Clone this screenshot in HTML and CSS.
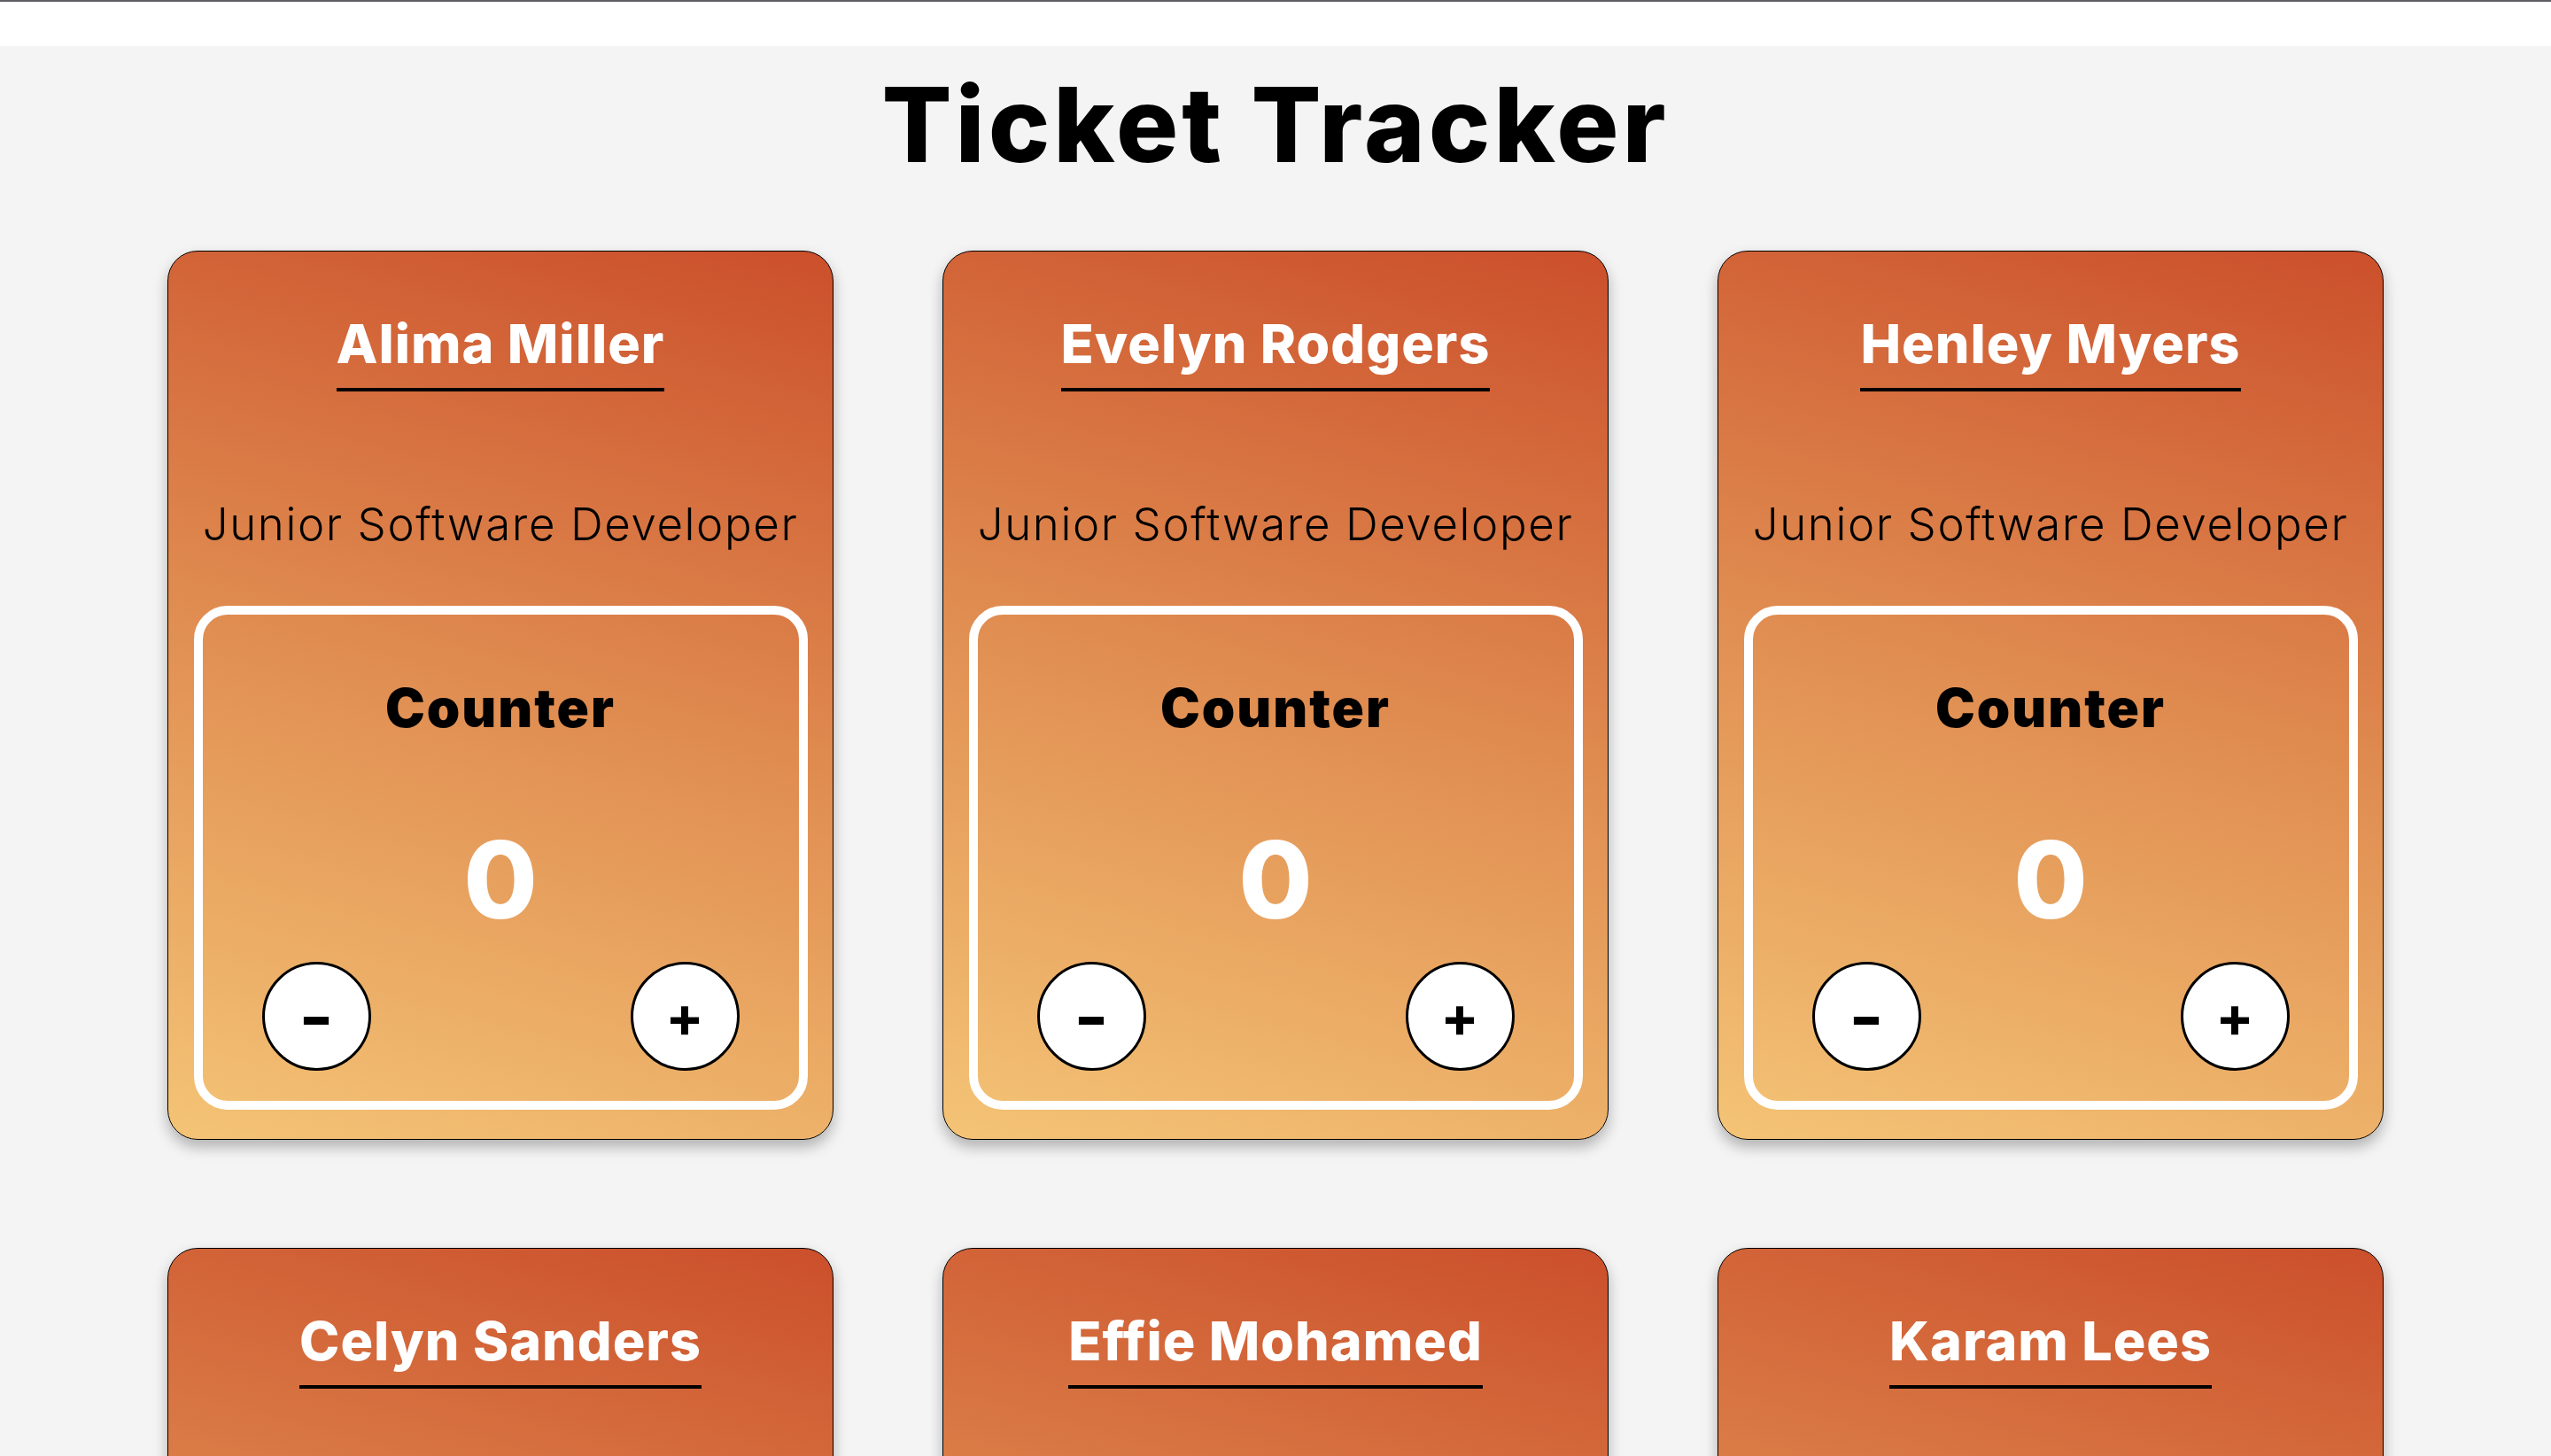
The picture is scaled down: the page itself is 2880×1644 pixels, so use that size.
FILE: index.html
```html
<!DOCTYPE html>
<html lang="en">
<head>
<meta charset="utf-8">
<title>Ticket Tracker</title>
<link rel="stylesheet" href="styles.css">
</head>
<body>
<div class="topbar"></div>
<main class="page">
  <h1 class="title">Ticket Tracker</h1>
  <section class="grid">
    <article class="card">
      <h2 class="name">Alima Miller</h2>
      <p class="role">Junior Software Developer</p>
      <div class="counter">
        <h3 class="counter-title">Counter</h3>
        <div class="count">0</div>
        <div class="buttons">
          <button class="btn btn-dec">-</button>
          <button class="btn">+</button>
        </div>
      </div>
    </article>
    <article class="card">
      <h2 class="name">Evelyn Rodgers</h2>
      <p class="role">Junior Software Developer</p>
      <div class="counter">
        <h3 class="counter-title">Counter</h3>
        <div class="count">0</div>
        <div class="buttons">
          <button class="btn btn-dec">-</button>
          <button class="btn">+</button>
        </div>
      </div>
    </article>
    <article class="card">
      <h2 class="name">Henley Myers</h2>
      <p class="role">Junior Software Developer</p>
      <div class="counter">
        <h3 class="counter-title">Counter</h3>
        <div class="count">0</div>
        <div class="buttons">
          <button class="btn btn-dec">-</button>
          <button class="btn">+</button>
        </div>
      </div>
    </article>
    <article class="card">
      <h2 class="name">Celyn Sanders</h2>
      <p class="role">Junior Software Developer</p>
      <div class="counter">
        <h3 class="counter-title">Counter</h3>
        <div class="count">0</div>
        <div class="buttons">
          <button class="btn btn-dec">-</button>
          <button class="btn">+</button>
        </div>
      </div>
    </article>
    <article class="card">
      <h2 class="name">Effie Mohamed</h2>
      <p class="role">Junior Software Developer</p>
      <div class="counter">
        <h3 class="counter-title">Counter</h3>
        <div class="count">0</div>
        <div class="buttons">
          <button class="btn btn-dec">-</button>
          <button class="btn">+</button>
        </div>
      </div>
    </article>
    <article class="card">
      <h2 class="name">Karam Lees</h2>
      <p class="role">Junior Software Developer</p>
      <div class="counter">
        <h3 class="counter-title">Counter</h3>
        <div class="count">0</div>
        <div class="buttons">
          <button class="btn btn-dec">-</button>
          <button class="btn">+</button>
        </div>
      </div>
    </article>
  </section>
</main>
</body>
</html>
```
FILE: styles.css
```css
* {
  box-sizing: border-box;
}

html, body {
  margin: 0;
  padding: 0;
}

body {
  background: #f4f4f4;
  font-family: "Inter", "Liberation Sans", sans-serif;
  color: #000;
  border-top: 2px solid #5f5f63;
}

.topbar {
  height: 50px;
  background: #ffffff;
}

.page {
  display: flex;
  flex-direction: column;
  align-items: center;
}

.title {
  margin: 19px 0 0;
  font-size: 117px;
  line-height: 140px;
  font-weight: 800;
  letter-spacing: 4px;
  text-align: center;
}

.grid {
  margin-top: 72px;
  display: grid;
  grid-template-columns: repeat(3, 752px);
  column-gap: 123px;
  row-gap: 122px;
}

.card {
  height: 1004px;
  border: 1px solid #000;
  border-radius: 34px;
  background: linear-gradient(195deg, #cb4f2b 0%, #e08d51 50%, #f4c476 100%);
  box-shadow: 0 8px 16px rgba(0, 0, 0, 0.28);
  display: flex;
  flex-direction: column;
  align-items: center;
  padding-top: 67px;
}

.name {
  margin: 0;
  font-size: 61px;
  line-height: 74px;
  font-weight: 800;
  color: #fff;
  letter-spacing: 1px;
  padding-bottom: 13px;
  border-bottom: 4px solid #000;
}

.role {
  margin: 119px 0 0;
  font-size: 51px;
  line-height: 62px;
  font-weight: 300;
  letter-spacing: 1.6px;
}

.counter {
  margin-top: 61px;
  width: 693px;
  height: 569px;
  border: 10px solid #fff;
  border-radius: 38px;
  display: flex;
  flex-direction: column;
  align-items: center;
  padding-top: 69px;
}

.counter-title {
  margin: 0;
  font-size: 60px;
  line-height: 72px;
  font-weight: 900;
  letter-spacing: 2px;
}

.count {
  margin-top: 85px;
  font-size: 121px;
  line-height: 146px;
  font-weight: 800;
  color: #fff;
}

.buttons {
  margin-top: 20px;
  align-self: stretch;
  display: flex;
  justify-content: space-between;
  padding: 0 67px;
}

.btn {
  width: 123px;
  height: 123px;
  border-radius: 50%;
  border: 3px solid #000;
  background: #fff;
  color: #000;
  font-family: "Inter", "Liberation Sans", sans-serif;
  font-size: 64px;
  font-weight: 700;
  line-height: 1;
  padding: 0;
  display: flex;
  align-items: center;
  justify-content: center;
}

.btn-dec {
  font-size: 86px;
  font-weight: 600;
}
```
